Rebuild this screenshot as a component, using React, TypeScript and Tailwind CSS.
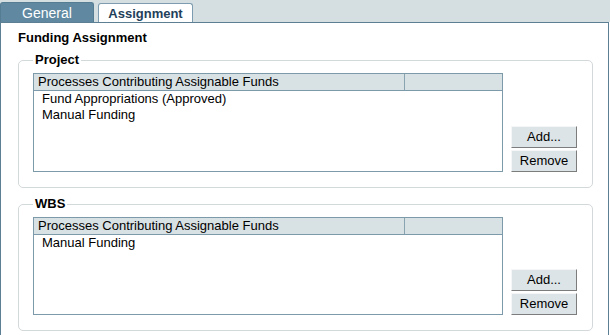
import * as React from 'react';

// 목록 + 버튼이 들어있는 그룹 박스
interface FundGroupProps {
  title: string;
  items: string[];
  listHeight: string;
  className?: string;
}

function FundGroup({ title, items, listHeight, className = '' }: FundGroupProps) {
  return (
    <fieldset
      className={`border border-[#d3d8da] rounded-[5px] pl-[14px] pr-[14px] pb-[15px] ${className}`}
    >
      <legend className="px-[2px] text-[13px] leading-[16px] font-bold text-black">
        {title}
      </legend>
      <div className="flex items-end gap-[8px] mt-[5px]">
        <div className={`w-[470px] ${listHeight} border border-[#7d9aaa] bg-white`}>
          <div className="flex h-[17px] bg-[#d8e1e4] border-b border-[#7d9aaa] text-[13px] leading-[16px] text-black">
            <div className="w-[371px] border-r border-[#8aa3b0] pl-[4px] whitespace-nowrap">
              Processes Contributing Assignable Funds
            </div>
            <div className="flex-1" />
          </div>
          {items.map((item) => (
            <div key={item} className="pl-[8px] text-[13px] leading-[16px] text-black">
              {item}
            </div>
          ))}
        </div>
        <div className="flex flex-col gap-[2px]">
          <button className="w-[66px] h-[22px] bg-[#dce4e7] border border-t-[#f4f6f7] border-l-[#f4f6f7] border-r-[#7c7c7c] border-b-[#7c7c7c] text-[13px] leading-[16px] text-black">
            Add...
          </button>
          <button className="w-[66px] h-[22px] bg-[#dce4e7] border border-t-[#f4f6f7] border-l-[#f4f6f7] border-r-[#7c7c7c] border-b-[#7c7c7c] text-[13px] leading-[16px] text-black">
            Remove
          </button>
        </div>
      </div>
    </fieldset>
  );
}

export default function App() {
  return (
    <div
      className="w-[610px] h-[335px] overflow-hidden bg-white"
      style={{ fontFamily: '"Liberation Sans", Arial, sans-serif' }}
    >
      {/* 탭 영역 */}
      <div className="flex items-end gap-[4px] h-[22px] bg-[#d5dfe1]">
        <div className="w-[94px] h-[20px] bg-[#6089a1] border border-b-0 border-[#547d94] rounded-t-[3px] text-center text-[14px] leading-[20px] text-white">
          General
        </div>
        <div className="w-[95px] h-[19px] bg-white border border-b-0 border-[#7d9cb0] rounded-t-[3px] text-center text-[13px] leading-[19px] font-bold text-[#23405a]">
          Assignment
        </div>
      </div>

      {/* 본문 패널 */}
      <div className="w-[609px] h-[313px] border-t border-l border-r border-[#5c7f94] pl-[17px] pr-[15px] pt-[7px]">
        <div className="text-[13px] leading-[16px] font-bold text-black">Funding Assignment</div>
        <FundGroup
          title="Project"
          items={['Fund Appropriations (Approved)', 'Manual Funding']}
          listHeight="h-[99px]"
          className="mt-[6px]"
        />
        <FundGroup
          title="WBS"
          items={['Manual Funding']}
          listHeight="h-[98px]"
          className="mt-[8px]"
        />
      </div>
    </div>
  );
}
